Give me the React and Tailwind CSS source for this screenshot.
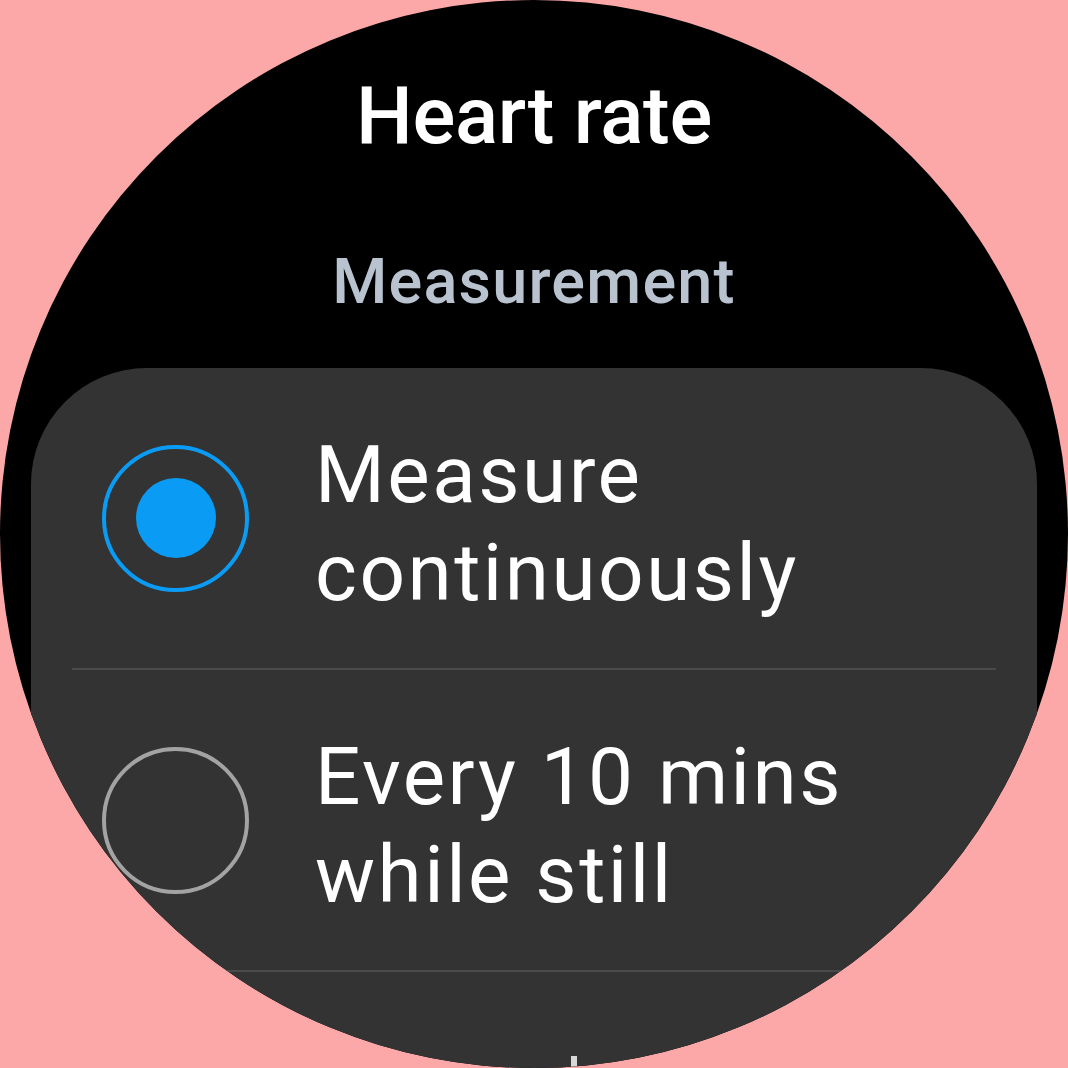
export default function App() {
  const options = [
    { id: "continuous", lines: ["Measure", "continuously"], selected: true },
    { id: "still", lines: ["Every 10 mins", "while still"], selected: false },
  ];

  return (
    <div
      className="w-[1068px] h-[1068px] bg-[#fda8a8]"
      style={{ fontFamily: "Roboto, 'Noto Sans', sans-serif" }}
    >
      <div className="relative w-[1068px] h-[1068px] rounded-full bg-black overflow-hidden flex flex-col items-center">
        <h1 className="mt-[72px] text-[80px] leading-[88px] font-medium text-white tracking-[-0.3px]">
          Heart rate
        </h1>
        <h2 className="mt-[86px] text-[63px] leading-[72px] font-medium text-[#b8c3cf] tracking-[1.2px]">
          Measurement
        </h2>

        <div className="mt-[50px] w-[1006px] flex-1 rounded-t-[116px] bg-[#333333] px-[41px]">
          {options.map((opt) => (
            <div key={opt.id}>
              <div className="h-[300px] flex items-center pl-[30px]">
                <div
                  className={
                    opt.selected
                      ? "w-[147px] h-[147px] shrink-0 rounded-full border-[4px] border-[#0a9cf5] flex items-center justify-center"
                      : "w-[147px] h-[147px] shrink-0 rounded-full border-[4px] border-[#a3a3a3]"
                  }
                >
                  {opt.selected && (
                    <div className="w-[80px] h-[80px] rounded-full bg-[#0a9cf5]" />
                  )}
                </div>
                <div className="ml-[66px] pt-[12px] text-white text-[80px] leading-[98px] font-normal tracking-[2.5px]">
                  {opt.lines.map((l) => (
                    <div key={l}>{l}</div>
                  ))}
                </div>
              </div>
              <div className="h-[2px] bg-[#4a4a4a]" />
            </div>
          ))}
        </div>

        <div className="absolute bottom-0 left-[571px] w-[6px] h-[12px] bg-[#d8d8d8]" />
      </div>
    </div>
  );
}
